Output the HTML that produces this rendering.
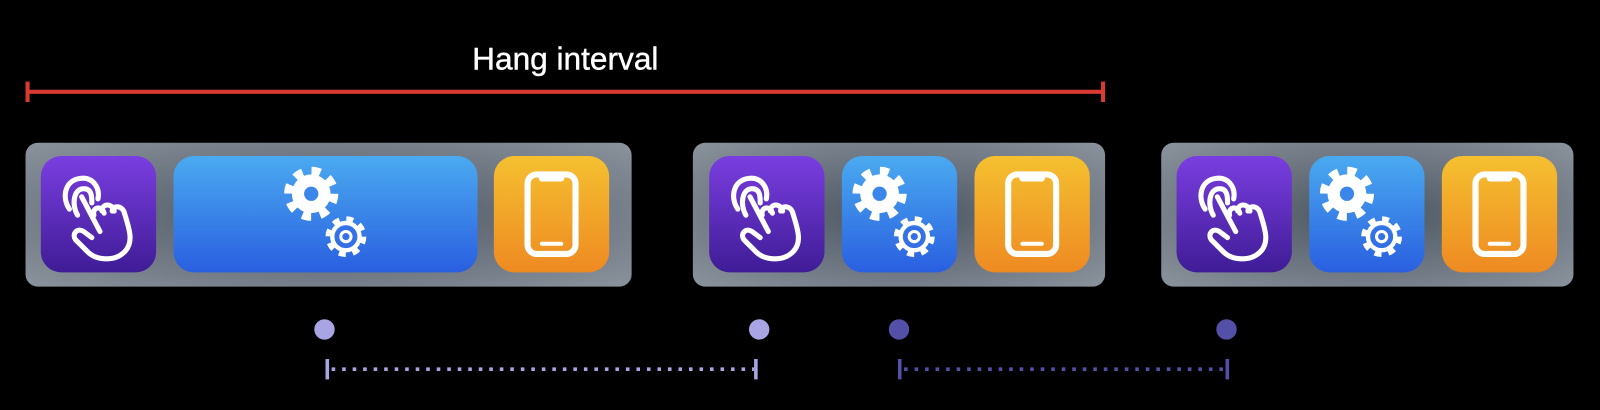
<!DOCTYPE html>
<html><head><style>
html,body{margin:0;padding:0;background:#000;width:1600px;height:410px;overflow:hidden}
</style></head><body>
<svg width="1600" height="410" viewBox="0 0 1568 402" preserveAspectRatio="none" xmlns="http://www.w3.org/2000/svg">
<defs>
<linearGradient id="pur" x1="0" y1="0" x2="0" y2="1"><stop offset="0" stop-color="#7a3ee0"/><stop offset="1" stop-color="#3f1c96"/></linearGradient>
<linearGradient id="blu" x1="0" y1="0" x2="0" y2="1"><stop offset="0" stop-color="#4aaaf0"/><stop offset="1" stop-color="#2a5fe0"/></linearGradient>
<linearGradient id="org" x1="0" y1="0" x2="0" y2="1"><stop offset="0" stop-color="#f5c030"/><stop offset="1" stop-color="#ee8a22"/></linearGradient>
<radialGradient id="tray" cx="0.5" cy="0.5" r="0.7"><stop offset="0" stop-color="#4b5560"/><stop offset="1" stop-color="#8a929c"/></radialGradient>
<g id="hand" fill="none" stroke="#fff" stroke-width="5" stroke-linecap="round" stroke-linejoin="round">
<path d="M28 52 C20 40 24 24 38 22 C52 20 58 32 56 42"/>
<path d="M36 58 C30 48 32 32 42 32 C50 32 50 40 50 46"/>
<path d="M40 40 L58 74 M52 58 C50 50 60 48 62 56 M60 54 C60 46 70 46 72 54 M70 54 C70 48 80 48 82 56 C86 70 92 84 82 94 C72 104 54 102 46 94 L34 82 C30 76 36 70 42 74 L50 80"/>
</g>
<g id="gears">
<circle cx="0" cy="0" r="19" fill="#fff"/>
<circle cx="0" cy="0" r="22" fill="none" stroke="#fff" stroke-width="9" stroke-dasharray="8.6 8.7"/>
<circle cx="0" cy="0" r="7" fill="#3a86ea"/>
<g transform="translate(34,42)">
<circle r="13" fill="none" stroke="#fff" stroke-width="3.5"/>
<circle r="17" fill="none" stroke="#fff" stroke-width="6" stroke-dasharray="6.7 6.7"/>
<circle r="15" fill="none" stroke="#fff" stroke-width="1"/>
<circle r="10" fill="#3570e6"/>
<circle r="5" fill="none" stroke="#fff" stroke-width="3"/>
</g>
</g>
<g id="phone" fill="none" stroke="#fff" stroke-width="6">
<rect x="33" y="18" width="47" height="78" rx="9"/>
<path d="M44 19 h25 v3 a3 3 0 0 1 -3 3 h-19 a3 3 0 0 1 -3 -3 z" fill="#fff" stroke="none"/>
<line x1="47" y1="86" x2="66" y2="86" stroke-width="4" stroke-linecap="round"/>
</g>
</defs>

<text x="554" y="68" fill="#fff" font-family="Liberation Sans, sans-serif" font-size="31" text-anchor="middle" stroke="#fff" stroke-width="0.4">Hang interval</text>
<rect x="26" y="88" width="1056" height="4" fill="#d93a32"/>
<rect x="25" y="80" width="4" height="20" fill="#d93a32"/>
<rect x="1079" y="80" width="4" height="20" fill="#d93a32"/>

<rect x="25" y="140" width="594" height="141" rx="12" fill="url(#tray)"/>
<rect x="40" y="153" width="113" height="114" rx="20" fill="url(#pur)"/>
<use href="#hand" x="40" y="153"/>
<rect x="170" y="153" width="298" height="114" rx="20" fill="url(#blu)"/>
<use href="#gears" x="305" y="190"/>
<rect x="484" y="153" width="113" height="114" rx="20" fill="url(#org)"/>
<use href="#phone" x="484" y="153"/>

<rect x="679" y="140" width="404" height="141" rx="12" fill="url(#tray)"/>
<rect x="695" y="153" width="113" height="114" rx="20" fill="url(#pur)"/>
<use href="#hand" x="695" y="153"/>
<rect x="825" y="153" width="113" height="114" rx="20" fill="url(#blu)"/>
<use href="#gears" x="862" y="190"/>
<rect x="955" y="153" width="113" height="114" rx="20" fill="url(#org)"/>
<use href="#phone" x="955" y="153"/>

<rect x="1138" y="140" width="404" height="141" rx="12" fill="url(#tray)"/>
<rect x="1153" y="153" width="113" height="114" rx="20" fill="url(#pur)"/>
<use href="#hand" x="1153" y="153"/>
<rect x="1283" y="153" width="113" height="114" rx="20" fill="url(#blu)"/>
<use href="#gears" x="1320" y="190"/>
<rect x="1413" y="153" width="113" height="114" rx="20" fill="url(#org)"/>
<use href="#phone" x="1413" y="153"/>

<circle cx="318" cy="323" r="10" fill="#a9a4e3"/>
<circle cx="744" cy="323" r="10" fill="#a9a4e3"/>
<circle cx="881" cy="323" r="10" fill="#5450a8"/>
<circle cx="1202" cy="323" r="10" fill="#5450a8"/>

<rect x="319" y="352" width="3.5" height="20" fill="#a9a4e3"/>
<rect x="739" y="352" width="3.5" height="20" fill="#a9a4e3"/>
<line x1="325" y1="362" x2="739" y2="362" stroke="#a9a4e3" stroke-width="3.5" stroke-dasharray="3.5 6.8"/>

<rect x="880" y="352" width="3.5" height="20" fill="#5450a8"/>
<rect x="1201" y="352" width="3.5" height="20" fill="#5450a8"/>
<line x1="886" y1="362" x2="1201" y2="362" stroke="#5450a8" stroke-width="3.5" stroke-dasharray="3.5 6.8"/>
</svg>
</body></html>
